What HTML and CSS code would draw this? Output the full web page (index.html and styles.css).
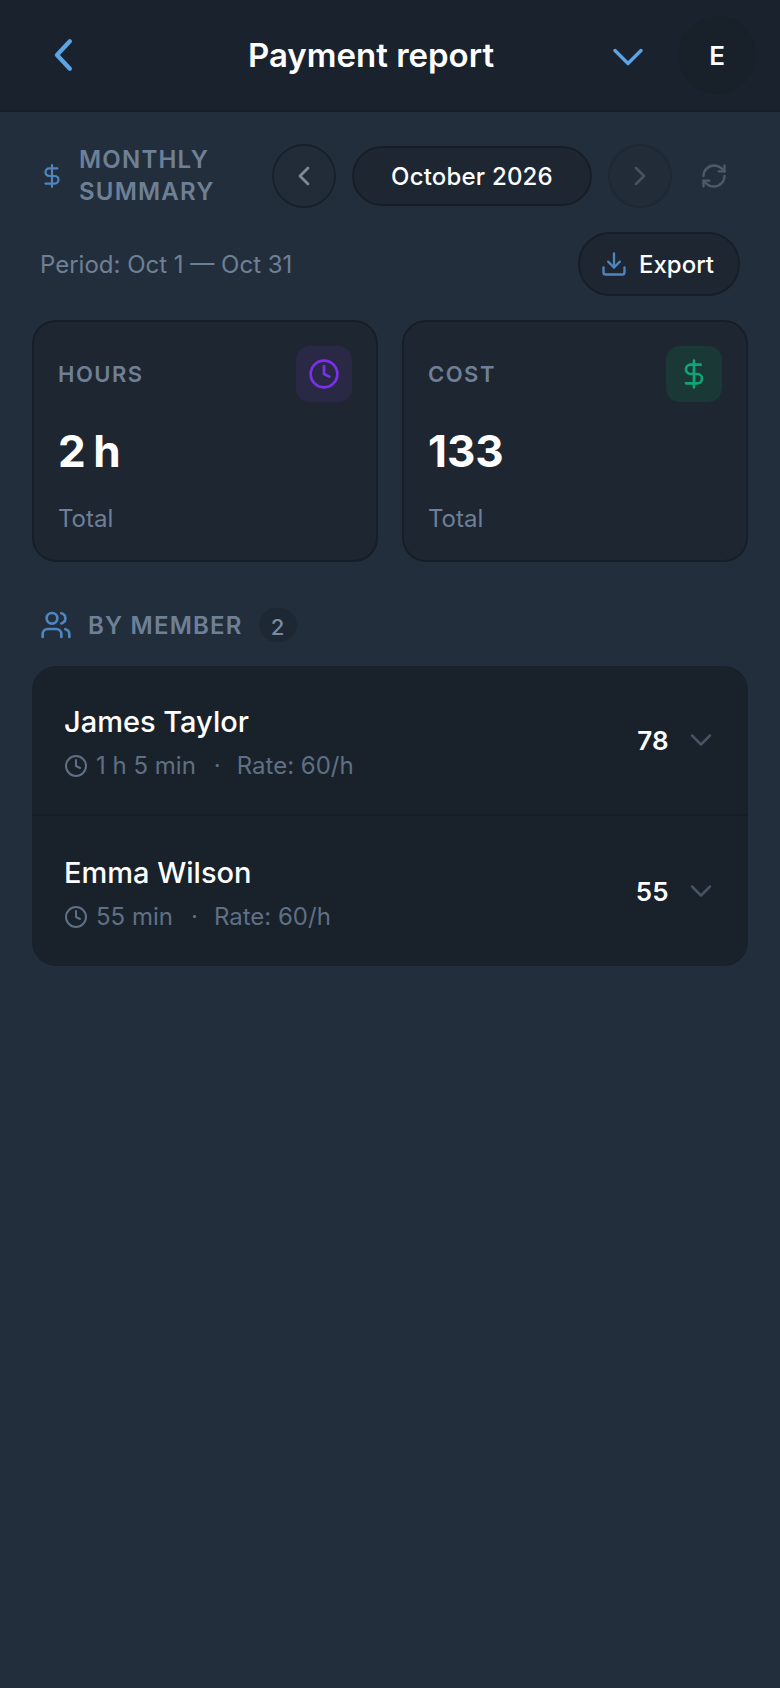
FILE: index.html
```html
<!DOCTYPE html>
<html lang="en">
<head>
    <meta charset="UTF-8">
    <meta name="viewport" content="width=device-width, initial-scale=1.0">
    <title>Payment report</title>
    <link rel="stylesheet" href="styles.css">
</head>
<body>
    <!-- Top bar -->
    <header class="topbar">
        <button class="back-btn" type="button" aria-label="Back">
            <svg width="40" height="40" viewBox="0 0 24 24" class="icon-blue"><path d="M15.5 3.800 7.800 12l7.700 8.200"/></svg>
        </button>
        <h1 class="topbar-title">Payment report</h1>
        <svg class="topbar-caret icon-blue" width="32" height="20" viewBox="0 0 32 20"><path d="M3 3.500 16 16.500 29 3.500"/></svg>
        <div class="avatar">E</div>
    </header>

    <main class="content">
        <!-- Month picker -->
        <section class="summary-row">
            <div class="summary-title">
                <svg class="icon-muted-blue" width="26" height="26" viewBox="0 0 24 24"><path d="M12 2v20M17 5H9.500a3.500 3.500 0 0 0 0 7h5a3.500 3.500 0 0 1 0 7H6"/></svg>
                <span>MONTHLY<br>SUMMARY</span>
            </div>
            <button class="round-btn" type="button" aria-label="Previous">
                <svg width="32" height="32" viewBox="0 0 24 24"><path d="M15 18l-6-6 6-6"/></svg>
            </button>
            <div class="month-pill">October 2026</div>
            <button class="round-btn round-btn-off" type="button" aria-label="Next">
                <svg width="32" height="32" viewBox="0 0 24 24"><path d="M9 18l6-6-6-6"/></svg>
            </button>
            <svg class="refresh" width="28" height="28" viewBox="0 0 24 24"><path d="M3 12a9 9 0 0 1 9-9 9.750 9.750 0 0 1 6.740 2.740L21 8"/><path d="M21 3v5h-5"/><path d="M21 12a9 9 0 0 1-9 9 9.750 9.750 0 0 1-6.740-2.740L3 16"/><path d="M8 16H3v5"/></svg>
        </section>

        <section class="period-row">
            <span class="period">Period: Oct 1 — Oct 31</span>
            <button class="export-btn" type="button">
                <svg class="icon-muted-blue" width="28" height="28" viewBox="0 0 24 24"><path d="M21 15v4a2 2 0 0 1-2 2H5a2 2 0 0 1-2-2v-4"/><path d="M7 10l5 5 5-5"/><path d="M12 15V3"/></svg>
                Export
            </button>
        </section>

        <!-- Totals -->
        <section class="cards">
            <div class="card">
                <div class="card-top">
                    <span class="card-label">HOURS</span>
                    <span class="card-icon card-icon-purple">
                        <svg width="32" height="32" viewBox="0 0 24 24"><circle cx="12" cy="12" r="10"/><path d="M12 6v6l4 2"/></svg>
                    </span>
                </div>
                <div class="card-value">2 h</div>
                <div class="card-note">Total</div>
            </div>
            <div class="card">
                <div class="card-top">
                    <span class="card-label">COST</span>
                    <span class="card-icon card-icon-green">
                        <svg width="32" height="32" viewBox="0 0 24 24"><path d="M12 2v20M17 5H9.500a3.500 3.500 0 0 0 0 7h5a3.500 3.500 0 0 1 0 7H6"/></svg>
                    </span>
                </div>
                <div class="card-value">133</div>
                <div class="card-note">Total</div>
            </div>
        </section>

        <!-- Members -->
        <section class="members-head">
            <svg class="icon-muted-blue" width="32" height="32" viewBox="0 0 24 24"><path d="M16 21v-2a4 4 0 0 0-4-4H6a4 4 0 0 0-4 4v2"/><circle cx="9" cy="7" r="4"/><path d="M22 21v-2a4 4 0 0 0-3-3.870"/><path d="M16 3.130a4 4 0 0 1 0 7.750"/></svg>
            <span class="members-title">BY MEMBER</span>
            <span class="members-count">2</span>
        </section>

        <section class="members">
            <div class="member">
                <div class="member-info">
                    <div class="member-name">James Taylor</div>
                    <div class="member-meta">
                        <svg width="24" height="24" viewBox="0 0 24 24"><circle cx="12" cy="12" r="10"/><path d="M12 6v6l4 2"/></svg>
                        <span>1 h 5 min</span>
                        <span class="dot">·</span>
                        <span>Rate: 60/h</span>
                    </div>
                </div>
                <span class="member-amount">78</span>
                <svg class="member-caret" width="24" height="14" viewBox="0 0 24 14"><path d="M3 2.500l9 9 9-9"/></svg>
            </div>
            <div class="member">
                <div class="member-info">
                    <div class="member-name">Emma Wilson</div>
                    <div class="member-meta">
                        <svg width="24" height="24" viewBox="0 0 24 24"><circle cx="12" cy="12" r="10"/><path d="M12 6v6l4 2"/></svg>
                        <span>55 min</span>
                        <span class="dot">·</span>
                        <span>Rate: 60/h</span>
                    </div>
                </div>
                <span class="member-amount">55</span>
                <svg class="member-caret" width="24" height="14" viewBox="0 0 24 14"><path d="M3 2.500l9 9 9-9"/></svg>
            </div>
        </section>
    </main>
</body>
</html>
```

FILE: styles.css
```css
* {
    box-sizing: border-box;
}
html, body {
    margin: 0;
    height: 100%;
}
body {
    min-height: 1688px;
    background: #232e3c;
    color: #fff;
    font-family: Inter, "Liberation Sans", sans-serif;
}
button {
    font-family: inherit;
    color: inherit;
    background: none;
    border: none;
    padding: 0;
}
svg {
    display: block;
    flex: none;
    fill: none;
    stroke: currentColor;
    stroke-width: 2;
    stroke-linecap: round;
    stroke-linejoin: round;
}
.icon-blue {
    color: #5ba4e6;
    stroke-width: 2.6;
}
.icon-muted-blue {
    color: #4f86c0;
}

/* Top bar */
.topbar {
    display: flex;
    align-items: center;
    height: 112px;
    padding: 0 24px 0 44px;
    background: #1a222d;
    border-bottom: 2px solid #17202a;
}
.back-btn {
    width: 40px;
    height: 40px;
}
.topbar-title {
    flex: 1;
    margin: 0;
    padding-left: 46px;
    text-align: center;
    font-size: 33px;
    font-weight: 600;
}
.topbar-caret {
    margin: 4px 34px 0 0;
    stroke-width: 3.4;
}
.avatar {
    display: flex;
    align-items: center;
    justify-content: center;
    width: 78px;
    height: 78px;
    border-radius: 50%;
    background: #18202a;
    font-size: 26px;
    font-weight: 600;
}

.content {
    padding: 0 32px;
}

/* Month picker */
.summary-row {
    display: flex;
    align-items: center;
    height: 64px;
    margin-top: 32px;
}
.summary-title {
    display: flex;
    align-items: center;
    gap: 14px;
    width: 240px;
    padding-left: 7px;
    font-size: 24px;
    font-weight: 600;
    line-height: 32px;
    letter-spacing: 1.2px;
    color: #6e8096;
}
.round-btn {
    display: flex;
    align-items: center;
    justify-content: center;
    width: 64px;
    height: 64px;
    border-radius: 50%;
    border: 2px solid #18202b;
    background: #222c39;
    color: #7c8b9c;
}
.round-btn-off {
    border-color: #1e2733;
    color: #46525f;
}
.month-pill {
    display: flex;
    align-items: center;
    justify-content: center;
    width: 240px;
    height: 60px;
    margin: 0 16px;
    border-radius: 30px;
    border: 2px solid #161e28;
    background: #1e2632;
    font-size: 24px;
    font-weight: 500;
    letter-spacing: 0.2px;
}
.refresh {
    margin-left: 28px;
    color: #4d5a68;
}

.period-row {
    display: flex;
    align-items: center;
    justify-content: space-between;
    margin-top: 24px;
    padding: 0 8px;
}
.period {
    font-size: 24px;
    color: #6e8096;
}
.export-btn {
    display: flex;
    align-items: center;
    gap: 11px;
    height: 64px;
    padding: 0 24px 0 20px;
    border-radius: 32px;
    border: 2px solid #161e28;
    background: #1e2632;
    font-size: 24px;
    font-weight: 500;
}

/* Totals */
.cards {
    display: grid;
    grid-template-columns: 1fr 1fr;
    gap: 24px;
    margin-top: 24px;
}
.card {
    height: 242px;
    padding: 24px 24px 0;
    border-radius: 24px;
    border: 2px solid #161e28;
    background: #1e2632;
}
.card-top {
    display: flex;
    justify-content: space-between;
    align-items: center;
}
.card-label {
    font-size: 22px;
    font-weight: 600;
    letter-spacing: 1.5px;
    color: #6e8096;
}
.card-icon {
    display: flex;
    align-items: center;
    justify-content: center;
    width: 56px;
    height: 56px;
    border-radius: 14px;
}
.card-icon-purple {
    background: #2a2945;
    color: #7d2ff0;
}
.card-icon-green {
    background: #193836;
    color: #10a574;
}
.card-value {
    margin-top: 18px;
    font-size: 44px;
    font-weight: 700;
    line-height: 62px;
    word-spacing: -3px;
}
.card-note {
    margin-top: 22px;
    font-size: 24px;
    color: #6e8096;
}

/* Members */
.members-head {
    display: flex;
    align-items: center;
    height: 36px;
    margin-top: 45px;
    padding-left: 8px;
}
.members-title {
    margin-left: 16px;
    font-size: 24px;
    font-weight: 600;
    letter-spacing: 1.2px;
    color: #6e8096;
}
.members-count {
    display: flex;
    align-items: center;
    justify-content: center;
    width: 38px;
    height: 34px;
    margin-left: 16px;
    padding-top: 3px;
    border-radius: 17px;
    background: #1e2834;
    font-size: 22px;
    font-weight: 500;
    color: #7c8b9c;
}
.members {
    margin-top: 23px;
    border-radius: 24px;
    background: #19212b;
}
.member {
    display: flex;
    align-items: center;
    height: 150px;
    padding: 0 35px 0 32px;
    border-bottom: 2px solid #161d26;
}
.member:last-child {
    border-bottom: none;
}
.member-info {
    flex: 1;
    padding-top: 6px;
}
.member-name {
    font-size: 29px;
    font-weight: 500;
    line-height: 34px;
}
.member-meta {
    display: flex;
    align-items: center;
    gap: 8px;
    margin-top: 12px;
    font-size: 24px;
    line-height: 30px;
    color: #5f7085;
}
.dot {
    margin: 0 8px 0 10px;
}
.member-amount {
    font-size: 26px;
    font-weight: 600;
    letter-spacing: 0.3px;
}
.member-caret {
    margin-left: 20px;
    color: #465361;
    stroke-width: 2.5;
}
```
